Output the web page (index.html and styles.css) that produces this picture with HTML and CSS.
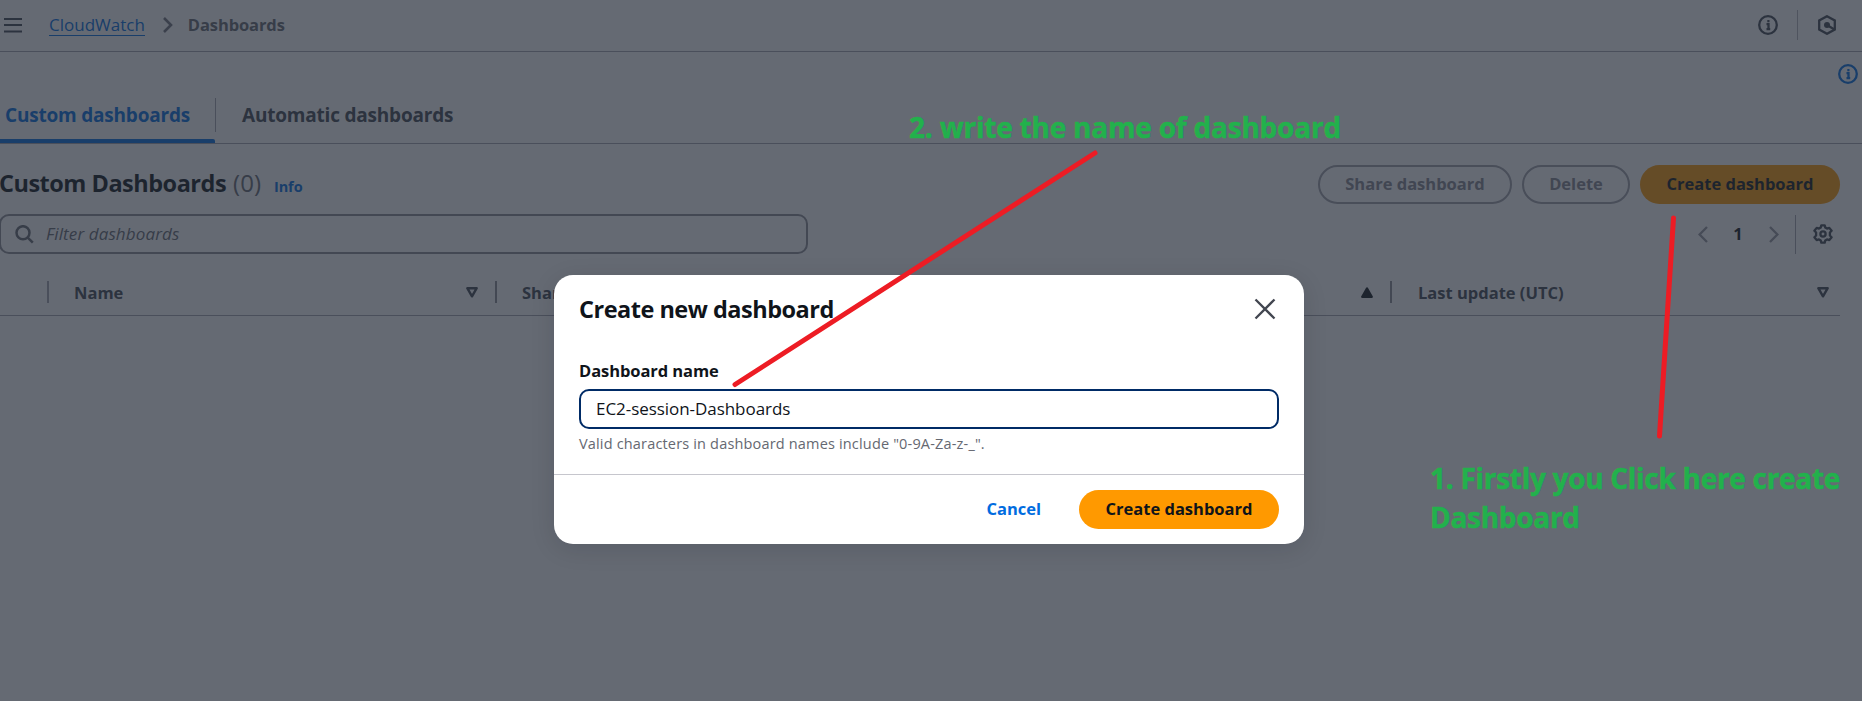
FILE: index.html
```html
<!DOCTYPE html>
<html lang="en">
<head>
<meta charset="utf-8">
<title>CloudWatch Dashboards</title>
<link rel="stylesheet" href="styles.css">
</head>
<body>
<div class="page">
  <header class="topbar">
    <svg class="menu-icon" width="18" height="16" viewBox="0 0 18 16"><path d="M0 2h18M0 8h18M0 14.500h18"/></svg>
    <nav class="crumbs">
      <a class="crumb-link">CloudWatch</a>
      <svg class="crumb-chevron" width="10" height="16" viewBox="0 0 10 16"><path d="M1 1l7 7-7 7"/></svg>
      <span class="crumb-current">Dashboards</span>
    </nav>
    <div class="top-tools">
      <svg class="icon" width="20" height="20" viewBox="0 0 20 20"><circle cx="10" cy="10" r="8.800"/><path d="M8.500 9.200h2v5.500M8.500 14.200h3.700M9.300 6.200h2.200" /></svg>
      <span class="tool-sep"></span>
      <svg class="icon" width="20" height="20" viewBox="0 0 20 20"><path d="M10 1.200l7.800 4.300v9L10 18.800l-7.800-4.300v-9z"/><circle class="dot" cx="10" cy="10" r="3"/><path d="M10 10l7 4.200"/></svg>
    </div>
  </header>

  <div class="help-strip">
    <svg class="icon icon-blue" width="20" height="20" viewBox="0 0 20 20"><circle cx="10" cy="10" r="8.800"/><path d="M8.500 9.200h2v5.500M8.500 14.200h3.700M9.300 6.200h2.200"/></svg>
  </div>

  <div class="tabs">
    <div class="tab tab-active">Custom dashboards</div>
    <div class="tab">Automatic dashboards</div>
  </div>

  <main class="panel">
    <div class="panel-head">
      <h2 class="panel-title">Custom Dashboards</h2>
      <span class="count">(0)</span>
      <a class="info">Info</a>
      <div class="actions">
        <span class="btn btn-disabled w-share">Share dashboard</span>
        <span class="btn btn-disabled w-delete">Delete</span>
        <span class="btn btn-primary">Create dashboard</span>
      </div>
    </div>

    <div class="filter-row">
      <div class="search">
        <svg width="19" height="19" viewBox="0 0 19 19"><circle cx="8" cy="7.700" r="6.500"/><path d="M12.500 12.300l5.300 5.300"/></svg>
        <span class="placeholder">Filter dashboards</span>
      </div>
      <div class="pager">
        <svg class="pager-arrow" width="10" height="17" viewBox="0 0 10 17"><path d="M9 1L1.600 8.500 9 16"/></svg>
        <span class="pager-page">1</span>
        <svg class="pager-arrow" width="10" height="17" viewBox="0 0 10 17"><path d="M1 1l7.400 7.500L1 16"/></svg>
        <span class="pager-sep"></span>
        <svg class="icon gear" width="20" height="20" viewBox="0 0 20 20"><path d="M8.300 1.300h3.400l.6 2.300 1.700 1 2.300-.7 2.300 2.900-1.700 1.700v3l1.700 1.700-2.300 2.900-2.300-.7-1.700 1-.6 2.300H8.300l-.6-2.300-1.700-1-2.300.7L1.400 13.200l1.700-1.700v-3L1.400 6.800l2.300-2.900 2.300.7 1.700-1z"/><circle cx="10" cy="10" r="2.600"/></svg>
      </div>
    </div>

    <div class="thead">
      <div class="th th-select"></div>
      <div class="th th-name">Name<svg width="12" height="11" viewBox="0 0 12 11"><path class="tri" d="M1.300 1.200h9.400L6 9.300z"/></svg></div>
      <div class="th th-share">Sharing<svg width="12" height="11" viewBox="0 0 12 11"><path class="tri tri-on" d="M1.300 9.800h9.400L6 1.500z"/></svg></div>
      <div class="th th-update">Last update (UTC)<svg width="12" height="11" viewBox="0 0 12 11"><path class="tri" d="M1.300 1.200h9.400L6 9.300z"/></svg></div>
    </div>
  </main>
</div>

<div class="overlay">
  <section class="modal">
    <div class="modal-head">
      <h2 class="modal-title">Create new dashboard</h2>
      <svg class="close" width="22" height="22" viewBox="0 0 22 22"><path d="M1.500 1.500l19 19M20.500 1.500l-19 19"/></svg>
    </div>
    <div class="modal-body">
      <label class="label">Dashboard name</label>
      <div class="field">EC2-session-Dashboards</div>
      <div class="hint">Valid characters in dashboard names include "0-9A-Za-z-_".</div>
    </div>
    <div class="modal-foot">
      <span class="cancel">Cancel</span>
      <span class="btn btn-primary">Create dashboard</span>
    </div>
  </section>
</div>

<svg class="marks" width="1862" height="701" viewBox="0 0 1862 701"><path d="M1095 153L735 384.500M1673.500 218L1659.500 436"/></svg>
<div class="note note-name">2. write the name of dashboard</div>
<div class="note note-create">1. Firstly you Click here create<br>Dashboard</div>
</body>
</html>
```
FILE: styles.css
```css
* { box-sizing: border-box; }
body {
  margin: 0;
  width: 1862px;
  height: 701px;
  overflow: hidden;
  position: relative;
  background: #fff;
  color: #0f141a;
  font: 400 17px/24px "Open Sans", "Noto Sans", sans-serif;
  white-space: nowrap;
}
h2 { margin: 0; }
svg { display: block; flex: none; fill: none; stroke: #424650; stroke-width: 2.3; }

/* top bar */
.topbar { display: flex; align-items: center; height: 52px; padding: 0 25px 2px 4px; border-bottom: 1px solid #a4a4ad; }
.menu-icon { stroke-width: 2; }
.crumbs { display: flex; align-items: center; margin-left: 27px; }
.crumb-link { color: #006ce0; border-bottom: 1px solid #006ce0; line-height: 21px; margin-top: 1px; }
.crumb-chevron { margin: 0 15px 0 18px; stroke: #72747e; stroke-width: 2.6; }
.crumb-current { color: #656871; font-weight: 700; font-size: 16.500px; letter-spacing: -.1px; }
.top-tools { display: flex; align-items: center; margin-left: auto; }
.tool-sep { width: 1px; height: 30px; margin: 0 19px; background: #b4b4bb; }
.dot { fill: #424650; stroke: none; }
.icon-blue { stroke: #006ce0; }

.help-strip { display: flex; justify-content: flex-end; height: 46px; padding: 12px 4px 0 0; }

/* tabs */
.tabs { display: flex; height: 46px; border-bottom: 1px solid #a4a4ad; }
.tab { position: relative; padding: 4px 25px 0 26px; font-size: 19px; line-height: 27px; font-weight: 700; letter-spacing: -.2px; color: #424650; }
.tab-active { width: 216px; padding-left: 5px; color: #006ce0; }
.tab-active::before { content: ""; position: absolute; right: 0; top: 0; width: 1px; height: 34px; background: #a4a4ad; }
.tab-active::after { content: ""; position: absolute; left: 0; right: 1px; bottom: 0; height: 4px; background: #006ce0; border-radius: 0 2px 0 0; }

/* panel */
.panel { padding-right: 22px; }
.panel-head { display: flex; align-items: center; height: 81px; }
.panel-title { margin: -4px 0 0 -1px; font-size: 23.500px; font-weight: 700; letter-spacing: -.5px; line-height: 30px; }
.count { margin: -4px 0 0 7px; font-size: 24px; color: #656871; }
.info { margin: 4px 0 0 13px; font-size: 14.500px; font-weight: 700; color: #006ce0; letter-spacing: -.1px; }
.actions { display: flex; gap: 10px; margin-left: auto; }
.btn { display: flex; align-items: center; justify-content: center; height: 39px; width: 200px; padding-bottom: 1px; border-radius: 20px; font-weight: 700; font-size: 16.500px; }
.btn-primary { background: #f90; }
.btn-disabled { border: 2px solid #a0a0a9; color: #85868f; }
.w-share { width: 194px; }
.w-delete { width: 108px; }

.filter-row { display: flex; justify-content: space-between; height: 40px; margin-top: -11px; }
.search { display: flex; align-items: center; width: 809px; margin-left: -1px; padding: 0 0 1px 14px; border: 2px solid #8c8c94; border-radius: 10px; }
.search svg { stroke: #656871; stroke-width: 2.500; margin-top: 1px; }
.placeholder { margin-left: 12px; font-style: italic; font-size: 17px; letter-spacing: .12px; color: #656871; }
.pager { display: flex; align-items: center; padding-right: 7px; }
.pager-arrow { stroke: #96969f; }
.pager-page { width: 61px; padding-right: 1px; text-align: center; font-weight: 700; font-size: 16.500px; }
.pager-sep { width: 1px; height: 39px; margin: 0 17px 0 16px; background: #a4a4ad; }
.gear { stroke-linejoin: round; }

/* table header */
.thead { display: flex; height: 62px; padding-top: 15px; border-bottom: 1px solid #a4a4ad; }
.th { position: relative; display: flex; align-items: center; justify-content: space-between; height: 46px; padding-top: 1px; font-weight: 700; font-size: 16.500px; color: #424650; }
.th::after { content: ""; position: absolute; right: 0; top: 12px; width: 2px; height: 22px; background: #8c8c94; }
.th-select { width: 49px; }
.th-select::after { background: #a4a4ad; }
.th-name { width: 448px; padding: 1px 19px 0 25px; }
.th-share { width: 895px; padding: 1px 19px 0 25px; }
.th-update { flex: 1; padding: 1px 11px 0 26px; }
.th-update::after { display: none; }
.tri { stroke-linejoin: round; stroke-width: 2.4; }
.tri-on { fill: #0f141a; stroke: #0f141a; }

/* modal */
.overlay { position: absolute; inset: 0; display: flex; justify-content: center; align-items: flex-start; padding: 275px 4px 0 0; background: rgba(35, 43, 55, .7); }
.modal { width: 750px; height: 269px; background: #fff; border-radius: 19px; box-shadow: 0 5px 24px rgba(0, 7, 22, .12); }
.modal-head { display: flex; justify-content: space-between; padding: 19px 28px 0 25px; }
.modal-title { font-size: 23.500px; font-weight: 700; letter-spacing: -.5px; line-height: 30px; }
.close { margin-top: 4px; }
.modal-body { height: 150px; padding: 35px 25px 0; }
.label { display: block; height: 30px; font-weight: 700; font-size: 16.500px; letter-spacing: -.08px; }
.field { display: flex; align-items: center; height: 40px; padding: 0 0 1px 15px; border: 2px solid #002b66; border-radius: 10px; letter-spacing: -.05px; }
.hint { margin-top: 4px; font-size: 14.500px; letter-spacing: .17px; line-height: 22px; color: #656871; }
.modal-foot { display: flex; justify-content: flex-end; align-items: center; gap: 38px; height: 70px; padding: 0 25px; border-top: 1px solid #c6c6cd; }
.cancel { font-weight: 700; font-size: 16.500px; color: #006ce0; padding-bottom: 1px; }

/* hand-drawn notes */
.marks { position: absolute; left: 0; top: 0; stroke: #ed1c24; stroke-width: 5; stroke-linecap: round; }
.note { position: absolute; font-weight: 700; font-size: 28px; line-height: 39px; color: #22b14c; -webkit-text-stroke: .5px #22b14c; }
.note-name { left: 909px; top: 108px; letter-spacing: -.21px; }
.note-create { left: 1430px; top: 459px; letter-spacing: -.29px; }
```
